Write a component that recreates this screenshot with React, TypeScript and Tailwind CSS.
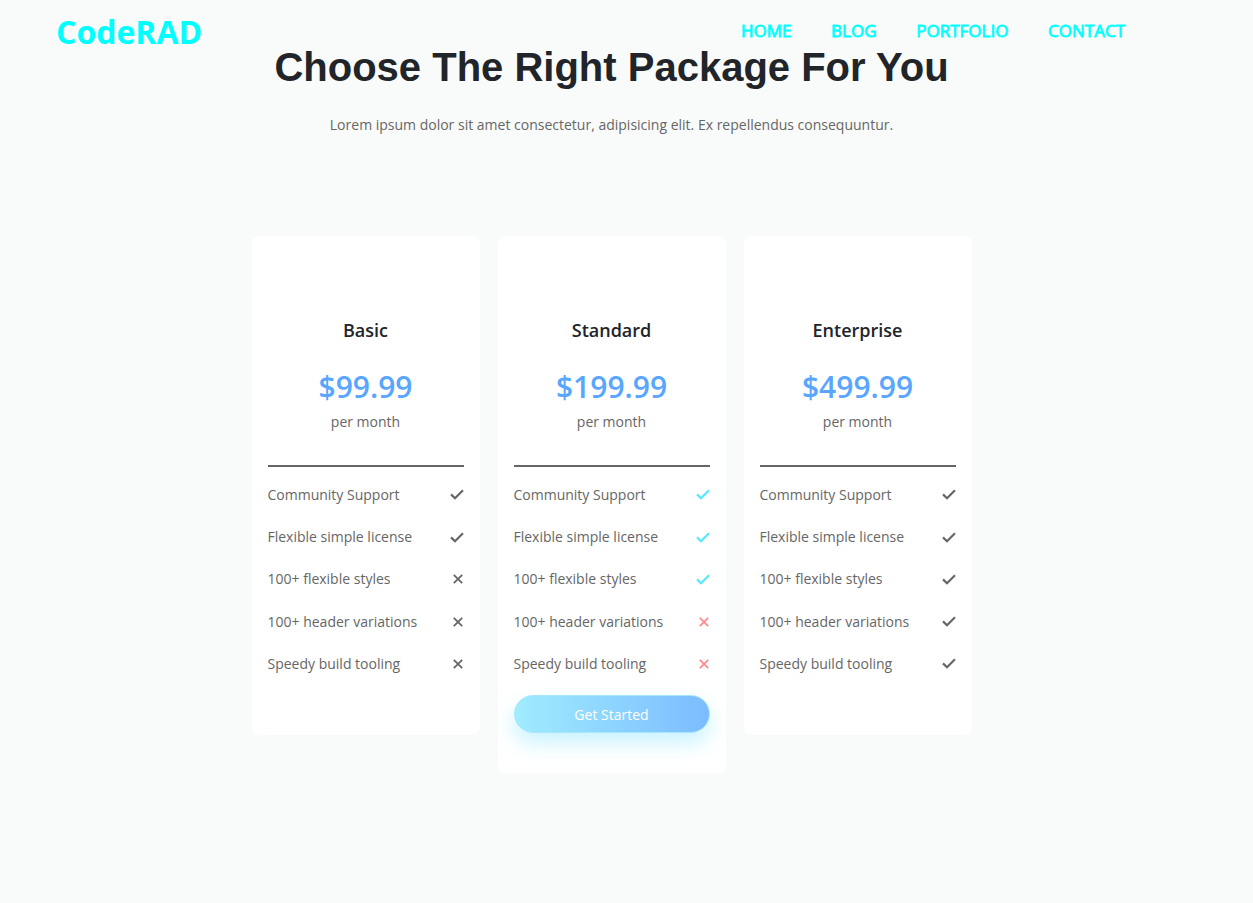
import React from 'react';

const features = [
  'Community Support',
  'Flexible simple license',
  '100+ flexible styles',
  '100+ header variations',
  'Speedy build tooling',
];

const plans = [
  { name: 'Basic', price: '$99.99', included: 2, highlight: false },
  { name: 'Standard', price: '$199.99', included: 3, highlight: true },
  { name: 'Enterprise', price: '$499.99', included: 5, highlight: false },
];

function CheckIcon({ className }: { className: string }) {
  return (
    <svg width="14" height="11" viewBox="0 0 14 11" fill="none" stroke="currentColor" strokeWidth="2.2" className={className}>
      <path d="M1 5.4 5 9.2 13 1.2" />
    </svg>
  );
}

function CrossIcon({ className }: { className: string }) {
  return (
    <svg width="10" height="10" viewBox="0 0 10 10" fill="none" stroke="currentColor" strokeWidth="1.8" className={className}>
      <path d="M0.8 0.8 9.2 9.2M9.2 0.8 0.8 9.2" />
    </svg>
  );
}

function PlanCard({ plan }: { plan: (typeof plans)[number] }) {
  return (
    <div className={`w-[228px] rounded-lg bg-white px-4 pt-[81px] ${plan.highlight ? 'pb-10' : 'pb-[50px]'}`}>
      {/* Titre et prix */}
      <h3 className="text-center text-[18px] leading-[27px] font-semibold text-[#212529]">{plan.name}</h3>
      <div className="mt-[20px] text-center text-[30px] leading-[45px] font-semibold text-[#58a6ff]">{plan.price}</div>
      <div className="mt-[2px] text-center text-sm leading-[21px] text-[#666666]">per month</div>
      <div className="mt-[33px] h-[2px] bg-[#666666]" />

      {/* Liste */}
      <ul className="mt-[6.7px]">
        {features.map((feature, i) => (
          <li key={feature} className="flex h-[42.25px] items-center justify-between text-sm text-[#666666]">
            <span>{feature}</span>
            {i < plan.included ? (
              <CheckIcon className={plan.highlight ? 'text-[#55e9ff]' : 'text-[#666666]'} />
            ) : (
              <CrossIcon className={plan.highlight ? 'mr-px text-[#ff8a90]' : 'mr-px text-[#666666]'} />
            )}
          </li>
        ))}
      </ul>

      {plan.highlight && (
        <button
          type="button"
          className="mt-[10.3px] h-[38px] w-full rounded-full border border-[#a8e6ff] bg-gradient-to-r from-[#a0ecff] to-[#7cbcff] pt-px text-sm text-white shadow-[0_10px_20px_rgba(120,225,255,0.4)]"
        >
          Get Started
        </button>
      )}
    </div>
  );
}

export default function App() {
  return (
    <div className="relative min-h-[903px] bg-[#f9fbfa] font-['Open_Sans',sans-serif]">
      {/* Nav */}
      <nav className="flex h-[45px] w-[1223px] items-start justify-between pl-[56px] pr-[98px] text-[#00ffff]">
        <a className="pt-[8px] text-[32px] leading-[48px] font-bold">CodeRAD</a>
        <div className="flex gap-[39.7px] pt-[19px] text-[17px] leading-[24px] font-normal [-webkit-text-stroke:0.8px_#00ffff]">
          <a>HOME</a>
          <a>BLOG</a>
          <a>PORTFOLIO</a>
          <a>CONTACT</a>
        </div>
      </nav>

      <div className="w-[1223px]">
        <h1 className="text-center font-['Liberation_Sans',sans-serif] text-[40px] leading-[44px] font-bold text-[#212529]">
          Choose The Right Package For You
        </h1>
        <p className="mt-[25px] text-center text-sm leading-[21px] text-[#666666]">
          Lorem ipsum dolor sit amet consectetur, adipisicing elit. Ex repellendus consequuntur.
        </p>

        <div className="mt-[101px] flex items-start justify-center gap-[18px]">
          {plans.map((plan) => (
            <PlanCard key={plan.name} plan={plan} />
          ))}
        </div>
      </div>
    </div>
  );
}
